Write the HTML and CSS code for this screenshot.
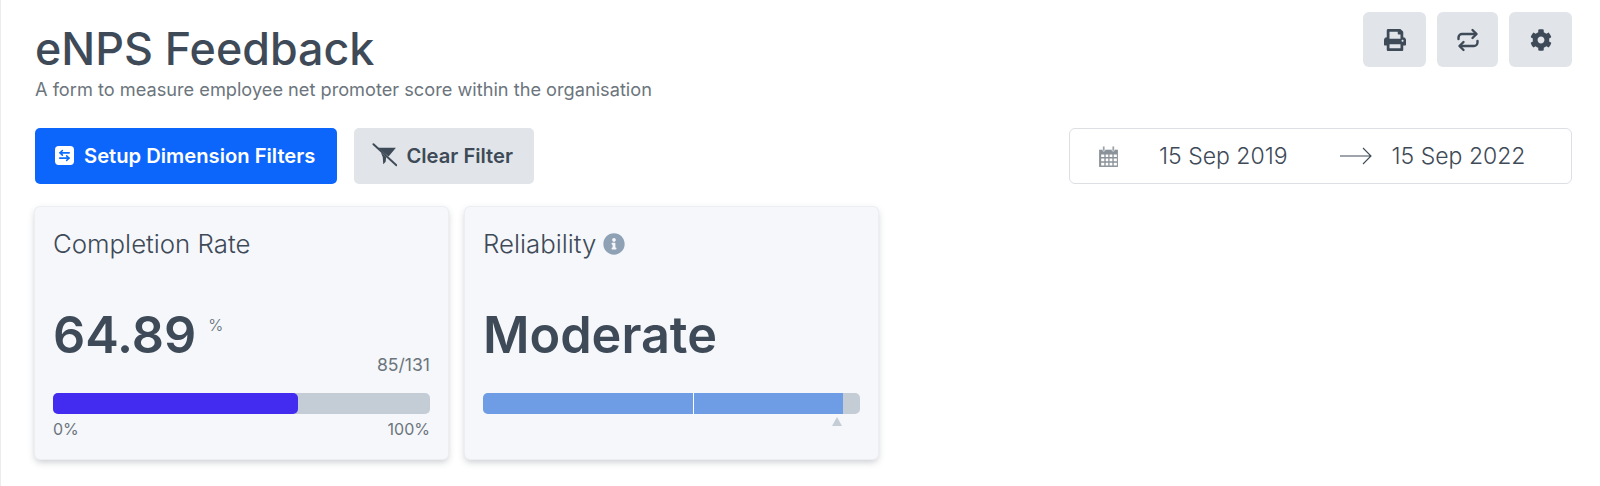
FILE: index.html
```html
<!DOCTYPE html>
<html lang="en">
<head>
<meta charset="utf-8">
<title>eNPS Feedback</title>
<link rel="stylesheet" href="styles.css">
</head>
<body>
<main class="page">
  <header class="head">
    <div>
      <h1 class="title">eNPS Feedback</h1>
      <p class="subtitle">A form to measure employee net promoter score within the organisation</p>
    </div>
    <div class="tools">
      <button class="tool" aria-label="Print"><svg class="tool-icon" viewBox="0 0 512 512"><path d="M448 192V77.25c0-8.49-3.37-16.62-9.37-22.63L393.37 9.37c-6-6-14.14-9.37-22.63-9.37H96C78.33 0 64 14.33 64 32v160c-35.35 0-64 28.65-64 64v112c0 8.84 7.16 16 16 16h48v96c0 17.67 14.33 32 32 32h320c17.67 0 32-14.33 32-32v-96h48c8.84 0 16-7.16 16-16V256c0-35.35-28.65-64-64-64zm-64 256H128v-96h256v96zm0-224H128V64h192v48c0 8.84 7.16 16 16 16h48v96zm48 72c-13.25 0-24-10.75-24-24 0-13.26 10.75-24 24-24s24 10.74 24 24c0 13.25-10.75 24-24 24z"/></svg></button>
      <button class="tool tool-narrow" aria-label="Repeat"><svg class="tool-icon" viewBox="0 0 24 24" fill="none" stroke="currentColor" stroke-width="2.4" stroke-linecap="round" stroke-linejoin="round"><path d="M2.500 11V9.500A3.500 3.500 0 0 1 6 6H20"/><path d="M16.500 2 20.500 6l-4 4"/><path d="M21.500 13v1.500A3.500 3.500 0 0 1 18 18H4"/><path d="M7.500 22l-4-4 4-4"/></svg></button>
      <button class="tool" aria-label="Settings"><svg class="tool-icon" viewBox="0 0 512 512"><path d="M487.4 315.7l-42.6-24.6c4.3-23.2 4.3-47 0-70.2l42.6-24.6c4.9-2.8 7.1-8.6 5.5-14-11.1-35.6-30-67.8-54.7-94.6-3.8-4.1-10-5.1-14.8-2.3L380.8 110c-17.9-15.4-38.5-27.3-60.8-35.1V25.8c0-5.6-3.9-10.5-9.4-11.7-36.7-8.2-74.3-7.8-109.2 0-5.5 1.2-9.4 6.1-9.4 11.7V75c-22.2 7.9-42.8 19.8-60.8 35.1L88.7 85.5c-4.9-2.8-11-1.9-14.8 2.3-24.7 26.7-43.6 58.9-54.7 94.6-1.7 5.4.6 11.2 5.5 14L67.3 221c-4.3 23.2-4.3 47 0 70.2l-42.6 24.6c-4.9 2.8-7.1 8.6-5.5 14 11.1 35.6 30 67.8 54.7 94.6 3.8 4.1 10 5.1 14.8 2.3l42.6-24.6c17.9 15.4 38.5 27.3 60.8 35.1v49.2c0 5.6 3.9 10.5 9.4 11.7 36.7 8.2 74.3 7.8 109.2 0 5.5-1.2 9.4-6.1 9.4-11.7v-49.2c22.2-7.9 42.8-19.8 60.8-35.1l42.6 24.6c4.9 2.8 11 1.9 14.8-2.3 24.7-26.7 43.6-58.9 54.7-94.6 1.500-5.500-.7-11.300-5.600-14.100zM256 336c-44.100 0-80-35.900-80-80s35.900-80 80-80 80 35.900 80 80-35.900 80-80 80z"/></svg></button>
    </div>
  </header>

  <section class="filters">
    <div class="filter-actions">
      <button class="btn btn-primary">
        <svg class="btn-icon-small" viewBox="0 0 18 18"><rect x="0" y="0" width="18" height="18" rx="3.500" fill="#fff"/><path d="M4.500 6.500h9M4.500 11.500h9M7 4.300 4.800 6.500 7 8.700M11 9.300 13.200 11.500 11 13.700" fill="none" stroke="#0d6efd" stroke-width="1.500" stroke-linecap="round" stroke-linejoin="round"/></svg>
        Setup Dimension Filters
      </button>
      <button class="btn btn-muted">
        <svg class="btn-icon" viewBox="0 0 26 24"><path d="M6 4.500h18.500L17 13.500 6 4.500zM9 9.500l5.500 4.500-.5 5-2.500 2.500-.5-7.500L9 9.500z" fill="#3e4a57"/><path d="M1.500 1 25 22.500" stroke="#3e4a57" stroke-width="2" stroke-linecap="round"/></svg>
        Clear Filter
      </button>
    </div>
    <div class="range">
      <svg class="cal" viewBox="0 0 20 22"><path d="M1 4.500h18v16.500H1z" fill="#8a9299"/><path d="M3 9h3v2.500H3zM7.300 9h2.500v2.500H7.300zM11 9h2.700v2.500H11zM15 9h3v2.500h-3zM3 13h3v2.500H3zM7.300 13h2.500v2.500H7.300zM11 13h2.700v2.500H11zM15 13h3v2.500h-3zM3 17h3v2.500H3zM7.300 17h2.500v2.500H7.300zM11 17h2.700v2.500H11zM15 17h3v2.500h-3z" fill="#fff"/><rect x="4.500" y="1" width="2" height="5" rx="1" fill="#8a9299" stroke="#fff" stroke-width=".6"/><rect x="13.500" y="1" width="2" height="5" rx="1" fill="#8a9299" stroke="#fff" stroke-width=".6"/></svg>
      <span class="range-date range-from">15 Sep 2019</span>
      <svg class="arrow" viewBox="0 0 32 18" fill="none" stroke="#3e4a57" stroke-width="1.100"><path d="M0 9h31M23 1l8 8-8 8"/></svg>
      <span class="range-date">15 Sep 2022</span>
    </div>
  </section>

  <section class="cards">
    <article class="card">
      <h2 class="card-title">Completion Rate</h2>
      <div class="metric-row"><span class="metric">64.89</span><span class="unit">%</span></div>
      <div class="count">85/131</div>
      <div class="bar"><div class="bar-fill bar-fill-rate"></div></div>
      <div class="scale"><span>0%</span><span>100%</span></div>
    </article>
    <article class="card">
      <h2 class="card-title">Reliability <svg class="info" viewBox="0 0 512 512"><path d="M256 8C119.043 8 8 119.083 8 256c0 136.997 111.043 248 248 248s248-111.003 248-248C504 119.083 392.957 8 256 8zm0 110c23.196 0 42 18.804 42 42s-18.804 42-42 42-42-18.804-42-42 18.804-42 42-42zm56 254c0 6.627-5.373 12-12 12h-88c-6.627 0-12-5.373-12-12v-24c0-6.627 5.373-12 12-12h12v-64h-12c-6.627 0-12-5.373-12-12v-24c0-6.627 5.373-12 12-12h64c6.627 0 12 5.373 12 12v100h12c6.627 0 12 5.373 12 12v24z"/></svg></h2>
      <div class="metric-row metric-row-word"><span class="metric">Moderate</span></div>
      <div class="bar bar-split">
        <div class="seg seg-a"></div>
        <div class="seg seg-b"></div>
        <span class="marker"></span>
      </div>
    </article>
  </section>
</main>
</body>
</html>
```
FILE: styles.css
```css
* { box-sizing: border-box; }
html, body { margin: 0; height: 100%; }
body {
  background: #fff;
  font-family: Inter, "Liberation Sans", sans-serif;
  color: #3e4a57;
}
.page {
  height: 100%;
  padding: 12px 28px 0 34px;
  border-left: 1px solid #ececec;
}
.head { display: flex; justify-content: space-between; align-items: flex-start; height: 116px; }
.title { margin: 14px 0 0; font-size: 44.8px; line-height: 46px; font-weight: 500; }
.subtitle { margin: 5px 0 0; font-size: 18.2px; line-height: 24px; color: #6c757d; }
.tools { display: flex; gap: 11px; }
.tool {
  display: flex; align-items: center; justify-content: center;
  width: 63px; height: 55px; border: 0; border-radius: 6px;
  background: #e1e5e9; color: #3e4a57; padding: 0;
}
.tool-narrow { width: 61px; }
.tool-icon { width: 22px; height: 22px; fill: currentColor; }
.tool-narrow .tool-icon { width: 24px; height: 24px; fill: none; }
.filters { display: flex; justify-content: space-between; align-items: flex-start; }
.filter-actions { display: flex; gap: 17px; }
.btn {
  display: flex; align-items: center; height: 56px; border: 0; border-radius: 5px;
  font: 600 20.2px Inter, "Liberation Sans", sans-serif; padding: 0 21px 2px;
  white-space: nowrap;
}
.btn-primary { width: 302px; background: #0d66fb; color: #fff; gap: 10px; padding-left: 20px; }
.btn-muted { width: 180px; background: #e1e5e9; color: #3e4a57; gap: 9px; padding-left: 18px; }
.btn-icon-small { width: 19px; height: 19px; }
.btn-icon { width: 26px; height: 24px; }
.range {
  display: flex; align-items: center; width: 503px; height: 56px;
  border: 1px solid #dcdfe3; border-radius: 6px; padding: 0 0 0 28px;
  font-size: 23px; font-weight: 300; color: #3e4a57;
}
.cal { width: 21px; height: 23px; flex: none; }
.range-date { white-space: nowrap; font-weight: 300; }
.range-from { margin-left: 40px; }
.arrow { width: 32px; height: 18px; margin: 0 20px 0 52px; flex: none; }
.cards { display: flex; gap: 17px; margin-top: 23px; }
.card {
  width: 413px; height: 252px; background: #f5f7fb; border-radius: 5px; padding: 21px 18px 0;
  box-shadow: 0 0 0 1px #eceef1, 0 3px 7px rgba(60, 70, 85, .28);
}
.card-title {
  margin: 0; display: flex; align-items: center; gap: 7px;
  font-size: 25.8px; line-height: 32px; font-weight: 300; color: #3e4a57;
}
.info { width: 22px; height: 22px; fill: #8fa1b5; }
.metric-row { display: flex; align-items: flex-start; margin-top: 45px; height: 49px; }
.metric { font-size: 50.4px; line-height: 60px; font-weight: 600; }
.unit { font-size: 16px; font-weight: 300; color: #5f6a75; margin: 10px 0 0 12px; }
.count { text-align: right; font-size: 17.6px; line-height: 22px; color: #6c757d; }
.metric-row-word { height: 71px; }
.bar { position: relative; height: 21px; background: #c4ccd5; border-radius: 5px; margin-top: 17px; display: flex; }
.bar-fill { height: 100%; border-radius: 5px; }
.bar-fill-rate { width: 64.89%; background: #432bf0; }
.scale { display: flex; justify-content: space-between; font-size: 16px; line-height: 20px; color: #6c757d; margin-top: 5px; }
.seg { height: 100%; background: #6f9de5; }
.seg-a { width: 56%; border-radius: 5px 0 0 5px; border-right: 1px solid #fff; }
.seg-b { width: 39.5%; }
.marker {
  position: absolute; top: 24px; left: 349px;
  border-left: 5px solid transparent; border-right: 5px solid transparent; border-bottom: 9px solid #c4ccd5;
}
```
